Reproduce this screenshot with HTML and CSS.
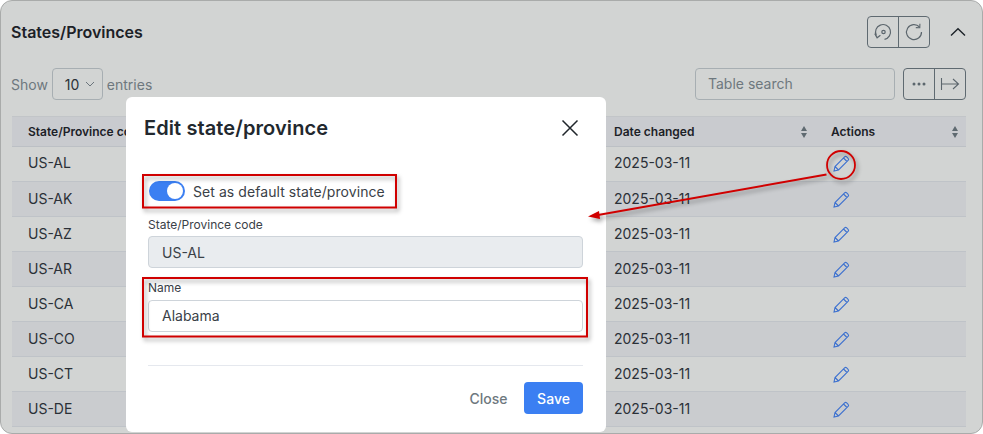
FILE: index.html
```html
<!DOCTYPE html>
<html lang="en">
<head>
<meta charset="utf-8">
<title>States/Provinces</title>
<link rel="stylesheet" href="styles.css">
</head>
<body>
<div class="card">
  <header class="card-head">
    <h2 class="card-title">States/Provinces</h2>
    <div class="btn-group">
      <button class="icon-btn"><svg width="20" height="20" viewBox="0 0 20 20" fill="none" stroke="#5c666d" stroke-width="1.2"><path d="M11.500 17.400A7.500 7.500 0 1 0 3.300 13.400"/><circle cx="10.500" cy="10" r="1.700"/><path d="M1.800 11.600l2.300 4.200 3.300-2.600"/></svg></button>
      <button class="icon-btn"><svg width="20" height="20" viewBox="0 0 20 20" fill="none" stroke="#5c666d" stroke-width="1.200"><path d="M15.500 5A7.500 7.500 0 1 0 17.500 10"/><path d="M11.800 5.600l4 .1.100-4" stroke-width="1.100"/></svg></button>
    </div>
    <button class="collapse"><svg width="16" height="10" viewBox="0 0 16 10" fill="none" stroke="#1c2228" stroke-width="1.400"><path d="M1 8.500L8 1.800l7 6.700"/></svg></button>
  </header>
  <div class="controls">
    <span class="muted">Show</span>
    <span class="select">10<svg width="10" height="6" viewBox="0 0 10 6" fill="none" stroke="#6b757c" stroke-width="1"><path d="M1 1l4 4 4-4"/></svg></span>
    <span class="muted">entries</span>
    <span class="search">Table search</span>
    <div class="btn-group">
      <button class="icon-btn"><svg width="16" height="6" viewBox="0 0 16 6" fill="#5c666d"><circle cx="3" cy="3" r="1.500"/><circle cx="8" cy="3" r="1.500"/><circle cx="13" cy="3" r="1.500"/></svg></button>
      <button class="icon-btn"><svg width="20" height="14" viewBox="0 0 20 14" fill="none" stroke="#5c666d" stroke-width="1.100"><path d="M1.500 1v12M2 7h16M13 2l5.500 5-5.500 5"/></svg></button>
    </div>
  </div>
  <table class="table">
    <colgroup><col class="c1"><col class="c2"><col class="c3"><col class="c4"></colgroup>
    <thead>
      <tr>
        <th>State/Province code</th>
        <th><i class="sort"></i></th>
        <th>Date changed<i class="sort"></i></th>
        <th>Actions<i class="sort"></i></th>
      </tr>
    </thead>
    <tbody>
      <tr class="first-row"><td>US-AL</td><td></td><td>2025-03-11</td><td><svg class="pencil" viewBox="0 0 18 18"><path d="M2 16l1-4.500L12.600 1.900a1.500 1.500 0 0 1 2.100 0l1.400 1.400a1.500 1.500 0 0 1 0 2.100L6.500 15zM3 11.500L6.500 15M11.500 3l3.500 3.500"/></svg></td></tr>
      <tr><td>US-AK</td><td></td><td>2025-03-11</td><td><svg class="pencil" viewBox="0 0 18 18"><path d="M2 16l1-4.500L12.600 1.900a1.500 1.500 0 0 1 2.100 0l1.400 1.400a1.500 1.500 0 0 1 0 2.100L6.500 15zM3 11.500L6.500 15M11.500 3l3.500 3.500"/></svg></td></tr>
      <tr><td>US-AZ</td><td></td><td>2025-03-11</td><td><svg class="pencil" viewBox="0 0 18 18"><path d="M2 16l1-4.500L12.600 1.900a1.500 1.500 0 0 1 2.100 0l1.400 1.400a1.500 1.500 0 0 1 0 2.100L6.500 15zM3 11.500L6.500 15M11.500 3l3.500 3.500"/></svg></td></tr>
      <tr><td>US-AR</td><td></td><td>2025-03-11</td><td><svg class="pencil" viewBox="0 0 18 18"><path d="M2 16l1-4.500L12.600 1.900a1.500 1.500 0 0 1 2.100 0l1.400 1.400a1.500 1.500 0 0 1 0 2.100L6.500 15zM3 11.500L6.500 15M11.500 3l3.500 3.500"/></svg></td></tr>
      <tr><td>US-CA</td><td></td><td>2025-03-11</td><td><svg class="pencil" viewBox="0 0 18 18"><path d="M2 16l1-4.500L12.600 1.900a1.500 1.500 0 0 1 2.100 0l1.400 1.400a1.500 1.500 0 0 1 0 2.100L6.500 15zM3 11.500L6.500 15M11.500 3l3.500 3.500"/></svg></td></tr>
      <tr><td>US-CO</td><td></td><td>2025-03-11</td><td><svg class="pencil" viewBox="0 0 18 18"><path d="M2 16l1-4.500L12.600 1.900a1.500 1.500 0 0 1 2.100 0l1.400 1.400a1.500 1.500 0 0 1 0 2.100L6.500 15zM3 11.500L6.500 15M11.500 3l3.500 3.500"/></svg></td></tr>
      <tr><td>US-CT</td><td></td><td>2025-03-11</td><td><svg class="pencil" viewBox="0 0 18 18"><path d="M2 16l1-4.500L12.600 1.900a1.500 1.500 0 0 1 2.100 0l1.400 1.400a1.500 1.500 0 0 1 0 2.100L6.500 15zM3 11.500L6.500 15M11.500 3l3.500 3.500"/></svg></td></tr>
      <tr><td>US-DE</td><td></td><td>2025-03-11</td><td><svg class="pencil" viewBox="0 0 18 18"><path d="M2 16l1-4.500L12.600 1.900a1.500 1.500 0 0 1 2.100 0l1.400 1.400a1.500 1.500 0 0 1 0 2.100L6.500 15zM3 11.500L6.500 15M11.500 3l3.500 3.500"/></svg></td></tr>
      <tr><td></td><td></td><td></td><td></td></tr>
    </tbody>
  </table>
</div>

<section class="modal">
  <div class="modal-head">
    <h3 class="modal-title">Edit state/province</h3>
    <button class="close-x"><svg width="18" height="18" viewBox="0 0 18 18" fill="none" stroke="#20262b" stroke-width="1.500"><path d="M1.500 1.500l15 15M16.500 1.500l-15 15"/></svg></button>
  </div>
  <div class="modal-body">
    <label class="switch-row"><span class="switch"><span class="knob"></span></span>Set as default state/province</label>
    <div class="field">
      <div class="field-label">State/Province code</div>
      <div class="input disabled">US-AL</div>
    </div>
    <div class="field name-field">
      <div class="field-label">Name</div>
      <div class="input">Alabama</div>
    </div>
    <div class="modal-foot">
      <button class="btn-link">Close</button>
      <button class="btn-save">Save</button>
    </div>
  </div>
</section>

<svg class="annot" width="983" height="434" viewBox="0 0 983 434" fill="none">
  <g class="shadowed">
    <rect x="143" y="175" width="253" height="32.500" stroke="#d00000" stroke-width="2"/>
    <rect x="143" y="278" width="444" height="58.500" stroke="#d00000" stroke-width="2"/>
    <circle cx="841" cy="165" r="14" stroke="#d00000" stroke-width="1.800"/>
    <path d="M826.500 174.500L598 215" stroke="#d00000" stroke-width="2"/>
    <path d="M588 216.500l11-5.500 1 8z" fill="#d00000"/>
  </g>
</svg>
</body>
</html>
```
FILE: styles.css
```css
* { box-sizing: border-box; }
html, body { margin: 0; padding: 0; height: 434px; overflow: hidden; background: #fff; }
body { font-family: Inter, "Liberation Sans", sans-serif; font-size: 14px; color: #22282e; position: relative; }
button { font: inherit; background: none; border: 0; padding: 0; }

.card {
  width: 983px; height: 434px; overflow: hidden;
  background: #d2d4d3; border: 1px solid #a9abaa; border-radius: 12px;
  padding: 15px 16px 0 10px; margin: 0;
}
.card-head { display: flex; align-items: center; height: 32px; }
.card-title { margin: 0; flex: 1; font-size: 16px; font-weight: 600; color: #1c2127; }
.collapse { width: 16px; height: 32px; margin: 0 0 0 20px; display: flex; align-items: center; justify-content: center; }

.btn-group { display: flex; width: 63px; height: 32px; border: 1px solid #5f6a71; border-radius: 4px; }
.icon-btn { flex: 1; display: flex; align-items: center; justify-content: center; }
.icon-btn + .icon-btn { border-left: 1px solid #5f6a71; }

.controls { display: flex; align-items: center; height: 32px; margin-top: 20px; width: 955px; }
.muted { color: #6e787e; }
.select {
  display: flex; align-items: center; gap: 6px; width: 51px; height: 32px; margin: 0 4px 0 4px;
  padding-left: 12px; border: 1px solid #a7aeb2; border-radius: 4px; color: #2b3137;
}
.search {
  margin-left: auto; width: 200px; height: 32px; padding: 0 12px; line-height: 30px;
  border: 1px solid #a7aeb2; border-radius: 4px; color: #6e787e;
}
.controls .btn-group { margin-left: 8px; }

.table { width: 954px; margin: 16px 0 0 1px; border-collapse: collapse; table-layout: fixed; font-size: 14px; }
.c1, .c2 { width: 293px; }
.c3 { width: 217px; }
.c4 { width: 151px; }
.table th {
  position: relative; height: 30px; padding: 0 16px; text-align: left; font-size: 12px; font-weight: 600;
  color: #1c2127; background: #c9cbcf; border-top: 1px solid #c2c5c8; border-bottom: 1px solid #bcc0c5;
}
.table td { height: 35px; padding: 0 16px 1px; color: #2a3037; border-bottom: 1px solid #bfc3c8; }
.table .first-row td { padding-bottom: 3px; }
.table tbody tr:nth-child(even) td { background: #cacccf; }
.sort { position: absolute; right: 6px; top: 9px; width: 8px; height: 12px; }
.sort::before, .sort::after { content: ""; position: absolute; left: 0; border-left: 3.500px solid transparent; border-right: 3.500px solid transparent; }
.sort::before { top: 0; border-bottom: 5px solid #5f6a71; }
.sort::after { bottom: 0; border-top: 5px solid #5f6a71; }
.pencil { display: block; width: 18px; height: 18px; margin: 2px 0 0 1px; fill: none; stroke: #3d71cf; stroke-width: 1.100; }

.modal {
  position: absolute; left: 126px; top: 97px; width: 480px; height: 335px;
  background: #fff; border-radius: 6px;
}
.modal-head { display: flex; align-items: center; justify-content: space-between; height: 62px; padding: 0 27px 0 18px; }
.modal-title { margin: 0; font-size: 20px; font-weight: 600; color: #22282e; letter-spacing: .1px; }
.close-x { width: 18px; height: 18px; display: block; }
.modal-body { padding: 0 23px 0 22px; }
.switch-row { display: flex; align-items: center; gap: 8px; height: 20px; margin: 22px 0 0 1px; color: #3a4147; font-size: 14px; letter-spacing: .07px; }
.switch { position: relative; width: 36px; height: 20px; border-radius: 10px; background: #3b7ff2; }
.knob { position: absolute; right: 2px; top: 2px; width: 16px; height: 16px; border-radius: 50%; background: #fff; }
.field { margin-top: 16px; }
.field-label { font-size: 12px; line-height: 15px; margin-bottom: 4px; color: #3a4147; }
.input { height: 32px; padding: 0 13px; line-height: 31px; border: 1px solid #ced4da; border-radius: 4px; font-size: 14px; color: #3a4147; background: #fff; }
.input.disabled { background: #e9ecef; }
.name-field { margin-top: 12px; }
.name-field .field-label { margin-bottom: 5px; }
.name-field .input { line-height: 30px; }
.modal-foot {
  display: flex; justify-content: flex-end; align-items: center; gap: 16.500px;
  margin-top: 33px; padding-top: 16px; border-top: 1px solid #e5e8ee;
}
.btn-link { color: #6e787e; font-size: 14px; font-weight: 500; }
.btn-save { width: 59px; height: 32px; border-radius: 4px; background: #3b7ff2; color: #fff; font-size: 14px; font-weight: 500; }

.annot { position: absolute; left: 0; top: 0; pointer-events: none; }
.shadowed { filter: drop-shadow(2px 3px 2px rgba(0, 0, 0, .35)); }
```
